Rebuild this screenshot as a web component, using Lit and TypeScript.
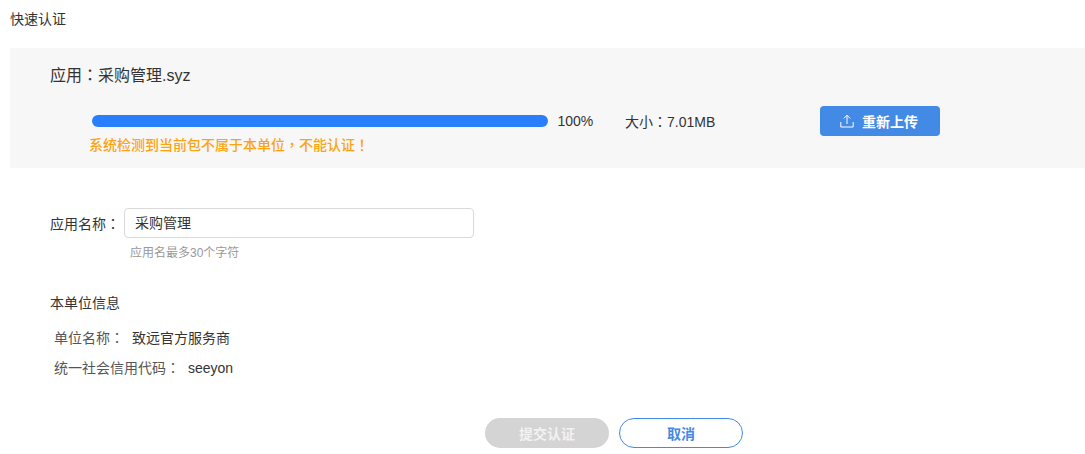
import { LitElement, html, css } from "lit";
import { customElement } from "lit/decorators.js";

const p = (s: string) => html`<span class="p">${s}</span>`;

@customElement("app-root")
export class AppRoot extends LitElement {
  static styles = css`
    :host {
      display: block;
      width: 1085px;
      height: 454px;
      overflow: hidden;
      background: #fff;
      color: #333;
      font-family: "Liberation Sans", "Noto Sans CJK SC", sans-serif;
      font-size: 14px;
    }
    .p { font-family: "Noto Sans CJK TC", sans-serif; line-height: 0; }
    .page { padding: 10px 0 0 10px; }
    .title { height: 18px; line-height: 18px; font-size: 14px; margin-bottom: 20px; }
    .panel {
      width: 1075px;
      height: 120px;
      background: #f7f7f7;
      padding: 16px 0 0 40px;
      box-sizing: border-box;
    }
    .app { font-size: 16px; line-height: 24px; height: 24px; }
    .row {
      display: flex;
      align-items: center;
      margin: 18px 0 0 42px;
      height: 30px;
    }
    .track { width: 456px; height: 12px; border-radius: 6px; background: #297ffb; }
    .pct { margin-left: 9.5px; width: 67.5px; font-size: 14px; }
    .size { width: 195px; font-size: 14px; }
    .upload {
      width: 120px;
      height: 30px;
      border-radius: 4px;
      background: #4389e6;
      color: #fff;
      font-weight: 700;
      display: flex;
      align-items: center;
      justify-content: center;
      gap: 8px;
      font-size: 14px;
    }
    .upload svg { display: block; margin-left: -2px; }
    .warn {
      margin: 0 0 0 39px;
      color: #fca311;
      font-size: 14px;
      line-height: 18px;
      font-weight: 500;
    }
    .field {
      display: flex;
      align-items: center;
      margin: 40px 0 0 40px;
    }
    .label { width: 74px; white-space: pre; }
    .input {
      width: 350px;
      height: 30px;
      box-sizing: border-box;
      border: 1px solid #d9d9d9;
      border-radius: 4px;
      background: #fff;
      padding-left: 10px;
      line-height: 28px;
    }
    .hint { margin: 6px 0 0 120px; font-size: 12px; line-height: 18px; color: #999; }
    .info { margin: 31px 0 0 40px; line-height: 20px; }
    .kv { display: flex; margin: 0 0 0 44px; line-height: 20px; height: 20px; }
    .k { color: #555; white-space: pre; }
    .v { color: #333; }
    .kv1 { margin-top: 15px; }
    .kv2 { margin-top: 10px; }
    .v1, .v2 { margin-left: 8px; }
    .actions {
      display: flex;
      gap: 10px;
      margin: 40px 0 0 475px;
    }
    .btn {
      width: 124px;
      height: 30px;
      box-sizing: border-box;
      border-radius: 15px;
      display: flex;
      align-items: center;
      justify-content: center;
      font-size: 14px;
      font-weight: 700;
    }
    .submit { background: #d4d4d4; color: #f2f2f2; }
    .cancel { background: #fff; border: 1px solid #4389e6; color: #4389e6; }
  `;

  render() {
    return html`
      <div class="page">
        <div class="title">快速认证</div>
        <div class="panel">
          <div class="app">应用${p("：")}采购管理.syz</div>
          <div class="row">
            <div class="track"></div>
            <div class="pct">100%</div>
            <div class="size">大小${p("：")}7.01MB</div>
            <div class="upload">
              <svg width="14" height="14" viewBox="0 0 14 14" fill="none" stroke="#fff" stroke-width="1">
                <path d="M7 10V1.5M3.8 4.5L7 1.2l3.2 3.3M.8 8v5h12.4V8" />
              </svg>
              <span>重新上传</span>
            </div>
          </div>
          <div class="warn">系统检测到当前包不属于本单位${p("，")}不能认证${p("！")}</div>
        </div>
        <div class="field">
          <div class="label">应用名称${p("：")}</div>
          <div class="input">采购管理</div>
        </div>
        <div class="hint">应用名最多30个字符</div>
        <div class="info">本单位信息</div>
        <div class="kv kv1"><span class="k">单位名称${p("：")}</span><span class="v v1">致远官方服务商</span></div>
        <div class="kv kv2"><span class="k">统一社会信用代码${p("：")}</span><span class="v v2">seeyon</span></div>
        <div class="actions">
          <div class="btn submit">提交认证</div>
          <div class="btn cancel">取消</div>
        </div>
      </div>
    `;
  }
}
